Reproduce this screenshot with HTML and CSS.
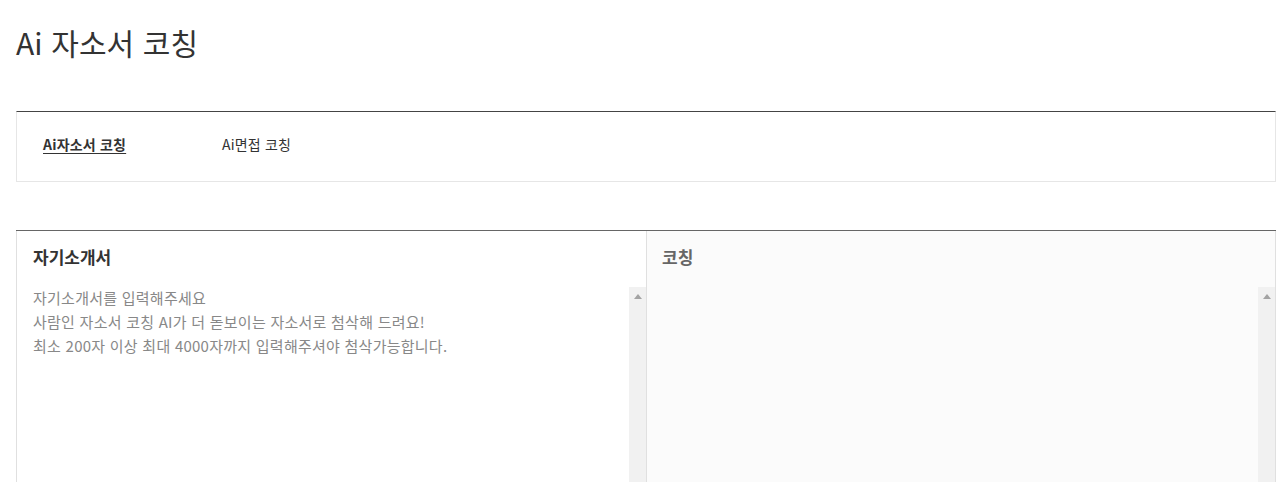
FILE: index.html
```html
<!DOCTYPE html>
<html lang="ko">
<head>
<meta charset="utf-8">
<title>Ai 자소서 코칭</title>
<link rel="stylesheet" href="styles.css">
</head>
<body>
<div class="page">
  <h1 class="title">Ai 자소서 코칭</h1>
  <nav class="tabs">
    <a class="tab tab-active" href="#">Ai자소서 코칭</a>
    <a class="tab" href="#">Ai면접 코칭</a>
  </nav>
  <section class="panels">
    <div class="panel panel-input">
      <h2 class="panel-title">자기소개서</h2>
      <div class="panel-body">
        <textarea class="panel-text" placeholder="자기소개서를 입력해주세요&#10;사람인 자소서 코칭 AI가 더 돋보이는 자소서로 첨삭해 드려요!&#10;최소 200자 이상 최대 4000자까지 입력해주셔야 첨삭가능합니다."></textarea>
        <div class="scrollbar"><svg class="scroll-arrow" width="8" height="5" viewBox="0 0 8 5"><polygon points="4,0 8,5 0,5" fill="#a3a3a3"/></svg></div>
      </div>
    </div>
    <div class="panel panel-result">
      <h2 class="panel-title panel-title-muted">코칭</h2>
      <div class="panel-body">
        <div class="panel-text"></div>
        <div class="scrollbar"><svg class="scroll-arrow" width="8" height="5" viewBox="0 0 8 5"><polygon points="4,0 8,5 0,5" fill="#a3a3a3"/></svg></div>
      </div>
    </div>
  </section>
</div>
</body>
</html>
```

FILE: styles.css
```css
* { box-sizing: border-box; }
html, body { margin: 0; padding: 0; background: #fff; }
body {
  font-family: "Noto Sans CJK KR", "Noto Sans", sans-serif;
  color: #333;
}
.page {
  width: 1260px;
  margin-left: 16px;
}
.title {
  margin: 0;
  padding-top: 21px;
  height: 111px;
  font-size: 30px;
  font-weight: 400;
  line-height: 42px;
  color: #333;
  letter-spacing: 0.1px;
}
.tabs {
  display: flex;
  align-items: center;
  height: 71px;
  border: 1px solid #e6e6e6;
  border-top: 1px solid #444;
  padding-left: 26px;
  padding-bottom: 5px;
  margin-bottom: 48px;
}
.tab {
  font-size: 14px;
  line-height: 20px;
  color: #333;
  text-decoration: none;
  letter-spacing: 0.2px;
}
.tab-active {
  font-weight: 700;
  text-decoration: underline;
  text-underline-offset: 3px;
  width: 179px;
}
.panels {
  display: grid;
  grid-template-columns: 631px 629px;
  height: 260px;
  border-top: 1px solid #666;
  overflow: hidden;
}
.panel {
  display: flex;
  flex-direction: column;
  height: 100%;
  border-left: 1px solid #e0e0e0;
}
.panel-input { border-right: 1px solid #e0e0e0; }
.panel-result {
  background: #fbfbfb;
  border-left: 0;
  border-right: 1px solid #e0e0e0;
}
.panel-title {
  margin: 0;
  padding: 14px 15px 0 16px;
  height: 56px;
  font-size: 17px;
  line-height: 24px;
  font-weight: 700;
  color: #333;
}
.panel-result .panel-title { padding-left: 15px; }
.panel-title-muted { color: #666; }
.panel-body {
  flex: 1;
  display: flex;
  min-height: 300px;
}
.panel-text {
  flex: 1;
  display: block;
  margin: -1px 0 0;
  border: 0;
  outline: none;
  resize: none;
  padding: 0 16px;
  font-family: "Noto Sans CJK KR", "Noto Sans", sans-serif;
  font-size: 15px;
  line-height: 24px;
  color: #333;
  background: transparent;
  overflow: hidden;
}
.panel-text::placeholder { color: #888; letter-spacing: 0.25px; }
.scrollbar {
  width: 17px;
  flex: none;
  background: #f1f1f1;
  display: flex;
  justify-content: center;
  padding-top: 7px;
}
.scroll-arrow { display: block; }
```
